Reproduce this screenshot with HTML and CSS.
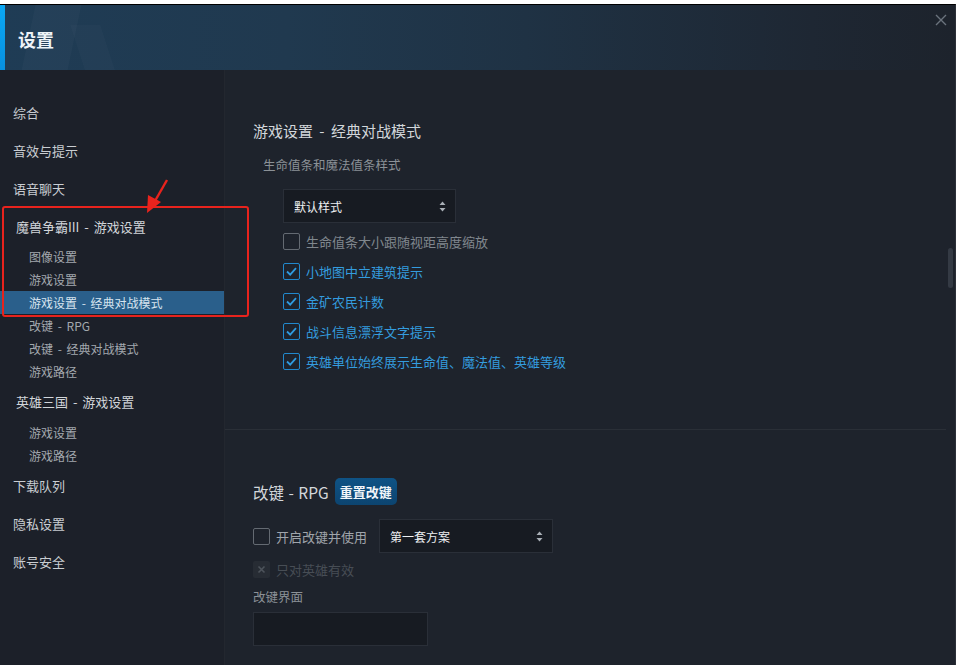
FILE: index.html
```html
<!DOCTYPE html>
<html lang="zh-CN">
<head>
    <meta charset="UTF-8">
    <title>设置</title>
    <link rel="stylesheet" href="styles.css">
</head>
<body>

    <div class="window">
        <div class="header">
            <div class="accent"></div>
            <h1>设置</h1>
            <svg class="close" width="12" height="12" viewBox="0 0 12 12">
                <path d="M1 1 L11 11 M11 1 L1 11" stroke="#6b737d" stroke-width="1.4"/>
            </svg>
        </div>

        <div class="body">
            <div class="sidebar">
                <div class="nav-item">综合</div>
                <div class="nav-item">音效与提示</div>
                <div class="nav-item">语音聊天</div>
                <div class="nav-group">魔兽争霸III - 游戏设置</div>
                <div class="nav-sub">图像设置</div>
                <div class="nav-sub">游戏设置</div>
                <div class="nav-sub selected">游戏设置 - 经典对战模式</div>
                <div class="nav-sub">改键 - RPG</div>
                <div class="nav-sub">改键 - 经典对战模式</div>
                <div class="nav-sub">游戏路径</div>
                <div class="nav-group">英雄三国 - 游戏设置</div>
                <div class="nav-sub">游戏设置</div>
                <div class="nav-sub">游戏路径</div>
                <div class="nav-item">下载队列</div>
                <div class="nav-item">隐私设置</div>
                <div class="nav-item">账号安全</div>
            </div>

            <div class="main">
                <div class="section first">
                    <h2>游戏设置 - 经典对战模式</h2>
                    <div class="field-label indent">生命值条和魔法值条样式</div>
                    <div class="select style-select">
                        <span>默认样式</span>
                        <svg width="7" height="11" viewBox="0 0 7 11"><path d="M3.5 0.5 L6.5 4 L0.5 4 Z M3.5 10.5 L6.5 7 L0.5 7 Z" fill="#a9afb6"/></svg>
                    </div>
                    <div class="checks">
                        <div class="check-row">
                            <span class="box"></span>
                            <span class="check-text">生命值条大小跟随视距高度缩放</span>
                        </div>
                        <div class="check-row on">
                            <span class="box"><svg width="13" height="13" viewBox="0 0 13 13"><path d="M2 6.5 L5.2 9.6 L11 3.2" fill="none" stroke="#2f9be0" stroke-width="1.8"/></svg></span>
                            <span class="check-text">小地图中立建筑提示</span>
                        </div>
                        <div class="check-row on">
                            <span class="box"><svg width="13" height="13" viewBox="0 0 13 13"><path d="M2 6.5 L5.2 9.6 L11 3.2" fill="none" stroke="#2f9be0" stroke-width="1.8"/></svg></span>
                            <span class="check-text">金矿农民计数</span>
                        </div>
                        <div class="check-row on">
                            <span class="box"><svg width="13" height="13" viewBox="0 0 13 13"><path d="M2 6.5 L5.2 9.6 L11 3.2" fill="none" stroke="#2f9be0" stroke-width="1.8"/></svg></span>
                            <span class="check-text">战斗信息漂浮文字提示</span>
                        </div>
                        <div class="check-row on">
                            <span class="box"><svg width="13" height="13" viewBox="0 0 13 13"><path d="M2 6.5 L5.2 9.6 L11 3.2" fill="none" stroke="#2f9be0" stroke-width="1.8"/></svg></span>
                            <span class="check-text">英雄单位始终展示生命值、魔法值、英雄等级</span>
                        </div>
                    </div>
                </div>

                <div class="section second">
                    <div class="title-row">
                        <h2>改键 - RPG</h2>
                        <button class="reset-btn">重置改键</button>
                    </div>
                    <div class="key-row">
                        <div class="check-row">
                            <span class="box"></span>
                            <span class="check-text light">开启改键并使用</span>
                        </div>
                        <div class="select plan-select">
                            <span>第一套方案</span>
                            <svg width="7" height="11" viewBox="0 0 7 11"><path d="M3.5 0.5 L6.5 4 L0.5 4 Z M3.5 10.5 L6.5 7 L0.5 7 Z" fill="#a9afb6"/></svg>
                        </div>
                    </div>
                    <div class="check-row disabled">
                        <span class="box"><svg width="11" height="11" viewBox="0 0 11 11"><path d="M2.5 2.5 L8.5 8.5 M8.5 2.5 L2.5 8.5" stroke="#4d535b" stroke-width="1.6"/></svg></span>
                        <span class="check-text">只对英雄有效</span>
                    </div>
                    <div class="field-label">改键界面</div>
                    <div class="key-input"></div>
                </div>

                <div class="scrollbar"></div>
            </div>
        </div>

        <!-- annotation -->
        <div class="mark-box"></div>
        <svg class="mark-arrow" width="40" height="45" viewBox="0 0 40 45">
            <path d="M31 1 L19 22" stroke="#e8231d" stroke-width="2.4" fill="none"/>
            <path d="M11 34 L12 16 L25 23 Z" fill="#e8231d"/>
        </svg>
    </div>

</body>
</html>
```

FILE: styles.css
```css
* {
    box-sizing: border-box;
}

body {
    margin: 0;
    background: #ffffff;
    font-family: "Noto Sans CJK SC", "Noto Sans", sans-serif;
}

.window {
    position: relative;
    margin-top: 4px;
    width: 956px;
    height: 661px;
    border-top: 1px solid #000;
    border-right: 1px solid #2c3038;
    background: #1d222a;
    overflow: hidden;
}

.header {
    position: relative;
    height: 65px;
    display: flex;
    align-items: center;
    background: linear-gradient(90deg, #1f3c55 0%, #20394f 30%, #1f3244 55%, #1e2733 85%, #1d232c 100%);
    overflow: hidden;
}

.header::before {
    content: "";
    position: absolute;
    left: 28px;
    top: -10px;
    width: 46px;
    height: 90px;
    background: rgba(255, 255, 255, 0.025);
    transform: skewX(-12deg);
}

.header::after {
    content: "";
    position: absolute;
    left: 80px;
    top: 20px;
    width: 30px;
    height: 60px;
    background: rgba(255, 255, 255, 0.02);
    transform: skewX(18deg);
}

.accent {
    width: 5px;
    height: 100%;
    background: linear-gradient(180deg, #0aa8f5, #0790e0);
}

.header h1 {
    margin: 0 0 0 13px;
    padding-top: 3px;
    font-size: 18px;
    font-weight: bold;
    color: #eef3f8;
}

.close {
    position: absolute;
    right: 8px;
    top: 9px;
}

.body {
    display: flex;
    height: 595px;
}

.sidebar {
    width: 225px;
    padding-top: 24px;
    background: #1c2029;
    border-right: 1px solid #23272f;
}

.nav-item {
    height: 38px;
    line-height: 38px;
    padding-left: 13px;
    font-size: 13px;
    color: #c9cdd2;
}

.nav-group {
    height: 37px;
    line-height: 37px;
    padding-left: 16px;
    font-size: 13px;
    color: #d2d6da;
    word-spacing: 2px;
}

.nav-group + .nav-sub + .nav-sub + .nav-sub + .nav-sub + .nav-sub + .nav-sub + .nav-group {
    height: 38px;
    line-height: 38px;
}

.nav-sub {
    height: 23px;
    line-height: 23px;
    padding-left: 29px;
    font-size: 12px;
    color: #a3a8ae;
    word-spacing: 2px;
}

.nav-sub.selected {
    background: #2a5f8b;
    color: #d7e4ef;
}

.main {
    position: relative;
    flex: 1;
    background: #1e232c;
}

.section {
    padding-left: 28px;
}

.section.first {
    height: 360px;
    padding-top: 51px;
    border-bottom: 1px solid #2a2f37;
    margin-right: 9px;
}

.section.second {
    padding-top: 48px;
}

h2 {
    margin: 0;
    font-size: 15px;
    font-weight: normal;
    line-height: 20px;
    color: #d3d7db;
    word-spacing: 3px;
}

.title-row h2 {
    font-size: 15.5px;
    word-spacing: 1px;
}

.field-label {
    font-size: 12.5px;
    line-height: 20px;
    color: #8b9197;
}

.field-label.indent {
    margin-top: 14px;
    padding-left: 10px;
}

.select {
    display: flex;
    align-items: center;
    justify-content: space-between;
    height: 34px;
    padding: 0 9px 0 10px;
    background: #171b22;
    border: 1px solid #2a2f38;
    font-size: 12px;
    color: #eef0f2;
}

.style-select {
    width: 173px;
    margin: 14px 0 0 30px;
}

.checks {
    margin-top: 3px;
    padding-left: 30px;
}

.check-row {
    display: flex;
    align-items: center;
    gap: 6px;
    height: 30px;
}

.box {
    display: flex;
    align-items: center;
    justify-content: center;
    width: 17px;
    height: 17px;
    border: 1.5px solid #646a72;
    border-radius: 2px;
}

.check-text {
    font-size: 13px;
    color: #80878e;
}

.check-text.light {
    color: #a0a5ab;
}

.check-row.on .box {
    border-color: #2188cc;
}

.check-row.on .check-text {
    color: #349cdf;
}

.title-row {
    display: flex;
    align-items: center;
    gap: 6px;
}

.reset-btn {
    height: 27px;
    padding: 0 5px;
    border: none;
    border-radius: 5px;
    background: linear-gradient(180deg, #0f5385, #0c4470);
    color: #f2f6fa;
    font-family: inherit;
    font-size: 13px;
    font-weight: bold;
}

.key-row {
    display: flex;
    align-items: center;
    gap: 12px;
    margin-top: 14px;
}

.plan-select {
    width: 174px;
}

.check-row.disabled .box {
    border: none;
    background: #272c34;
}

.check-row.disabled .check-text {
    color: #474d55;
}

.second .check-row.disabled {
    margin-top: 1px;
}

.second .field-label {
    margin-top: 3px;
}

.key-input {
    width: 175px;
    height: 34px;
    margin-top: 5px;
    background: #171b22;
    border: 1px solid #2a2f38;
}

.scrollbar {
    position: absolute;
    right: 2px;
    top: 178px;
    width: 5px;
    height: 40px;
    border-radius: 3px;
    background: #343a44;
}

.mark-box {
    position: absolute;
    left: 2px;
    top: 201px;
    width: 247px;
    height: 111px;
    border: 2.5px solid #e8231d;
    border-radius: 3px;
}

.mark-arrow {
    position: absolute;
    left: 136px;
    top: 174px;
}
```
